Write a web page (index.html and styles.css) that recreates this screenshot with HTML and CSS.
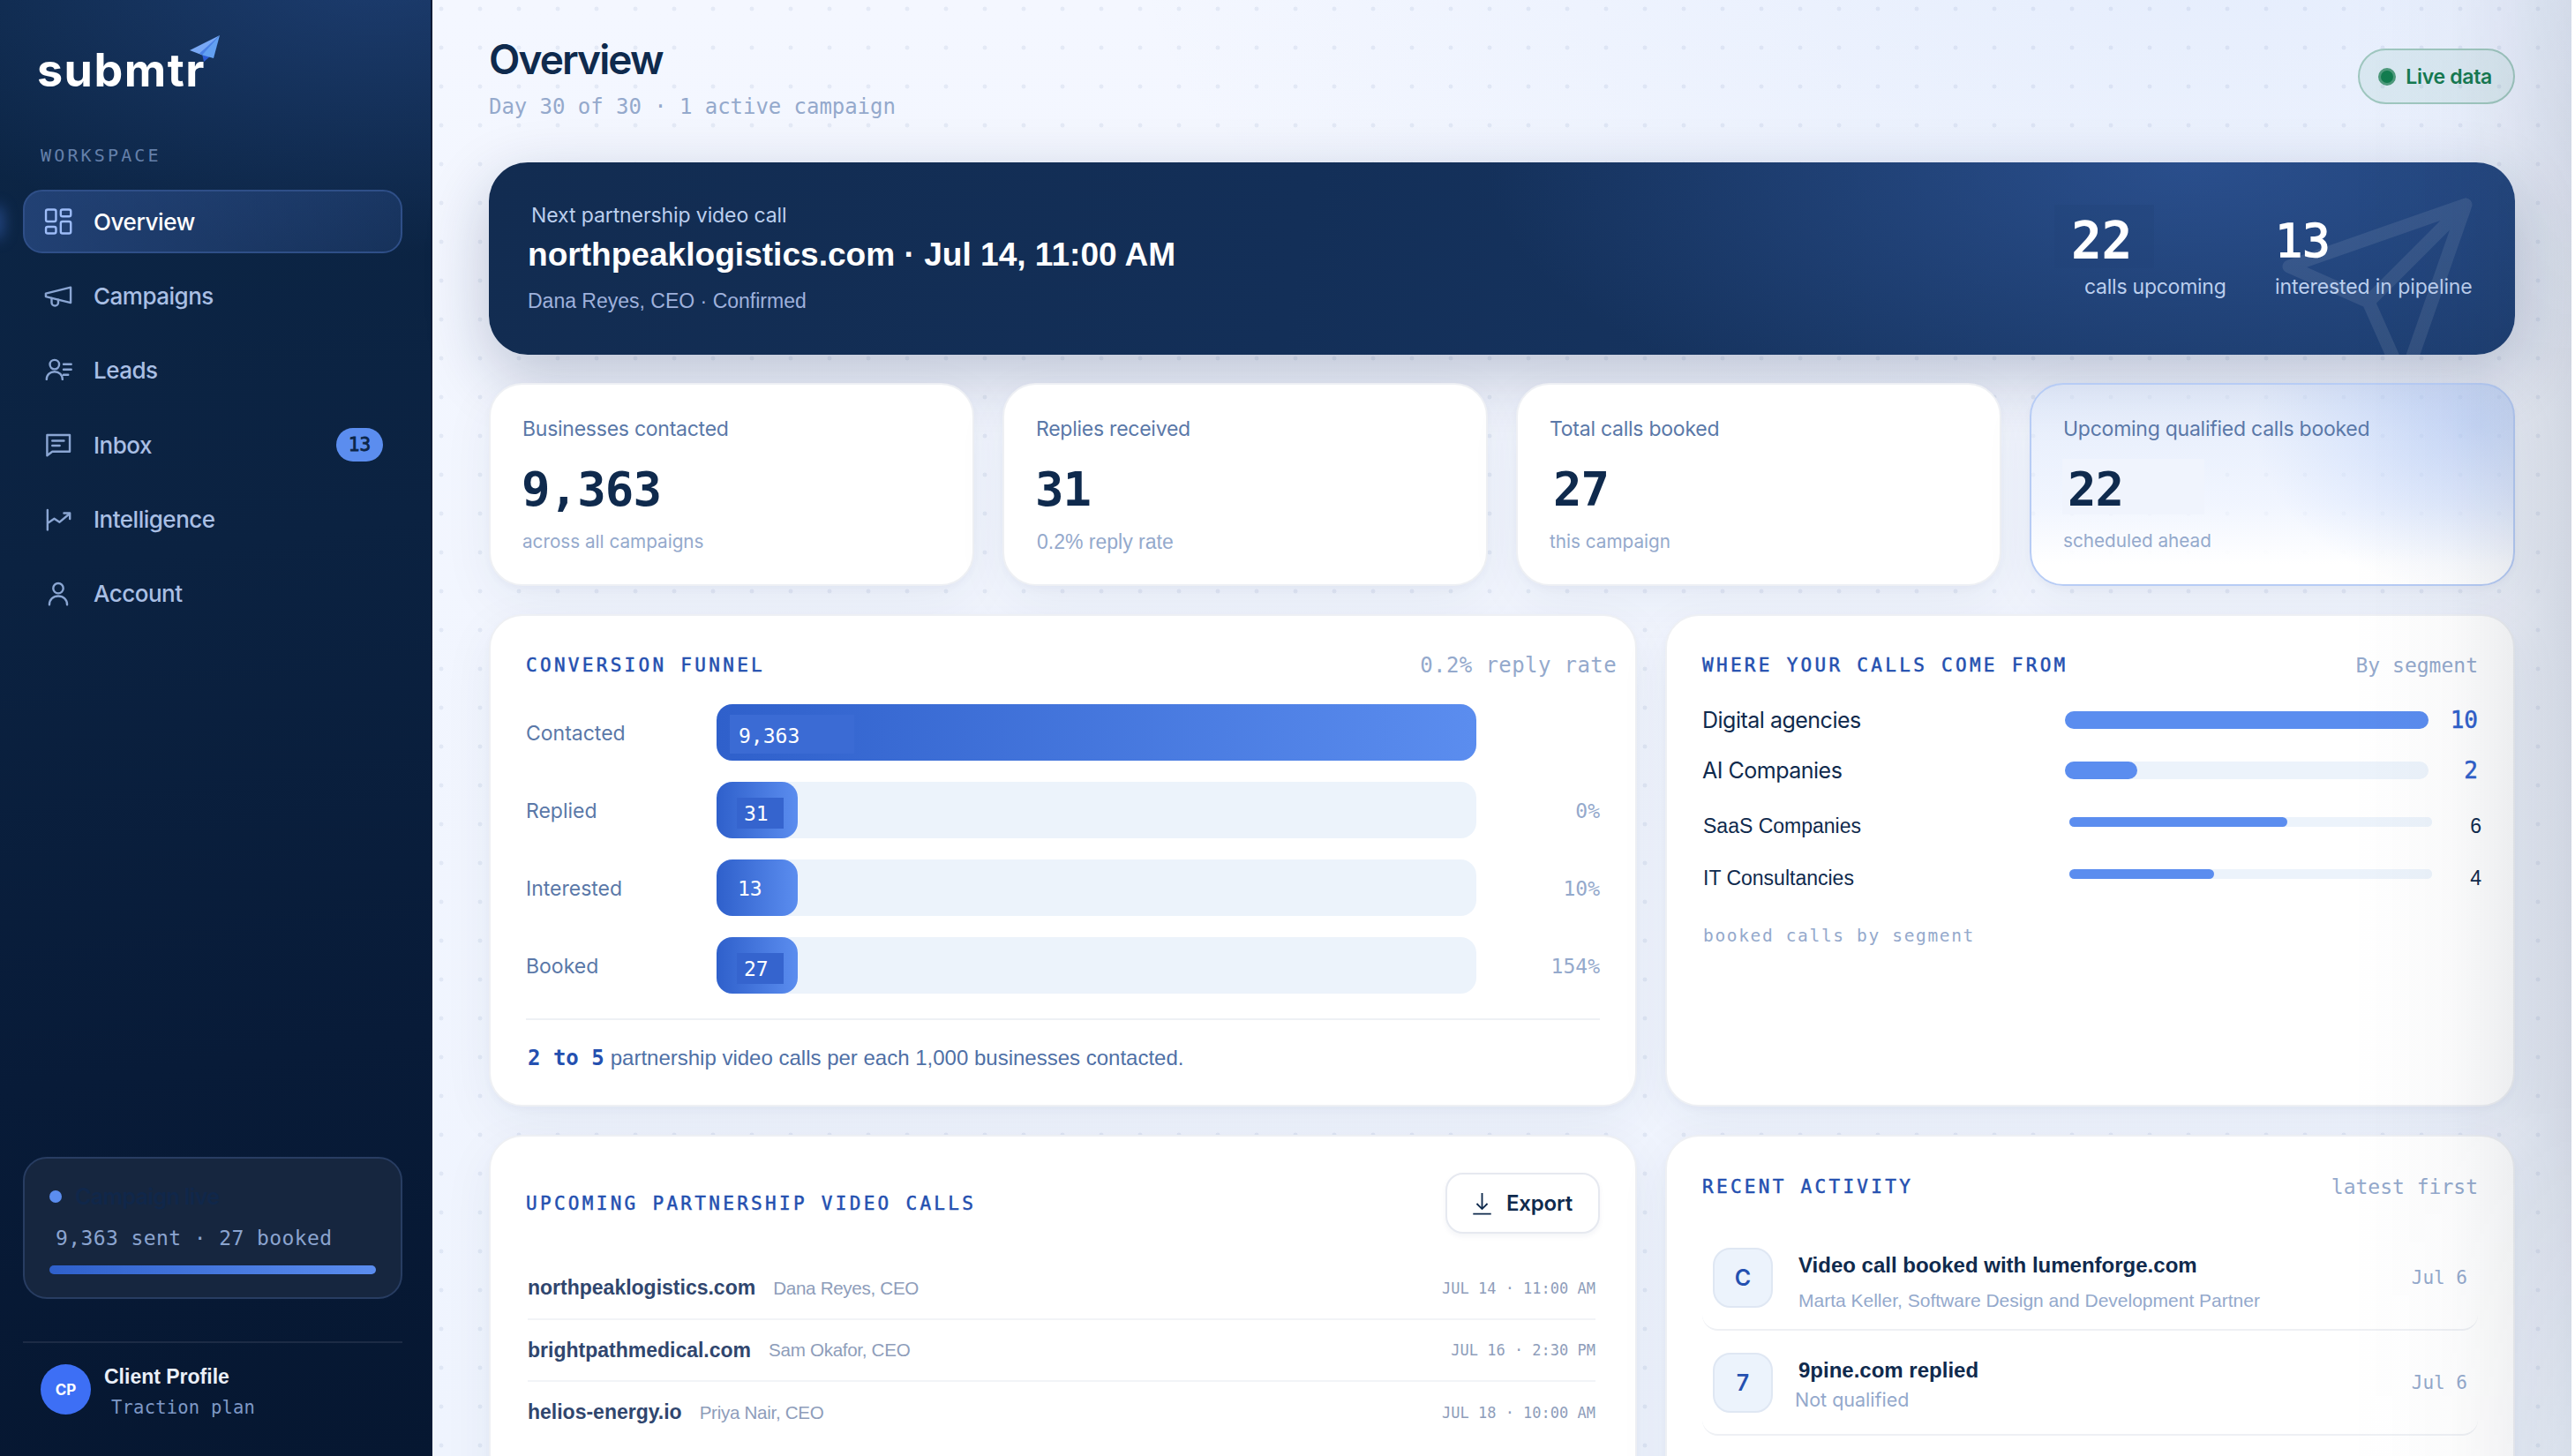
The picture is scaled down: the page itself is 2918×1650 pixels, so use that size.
FILE: index.html
```html
<!DOCTYPE html>
<html lang="en">
<head>
	<meta charset="UTF-8">
	<title>submtr - Overview</title>
	<link rel="stylesheet" href="styles.css">
</head>
<body>
	<div class="app">
		<aside class="sidebar">
			<div class="logo">submtr
				<svg class="logo-plane" viewBox="0 0 36 32">
					<path d="M15 22 L17 31 L24 25 Z" fill="#2c5bd6"/>
					<path d="M1 18 L35 1 L14 23 Z" fill="#79a8f5"/>
					<path d="M35 1 L14 23 L28 27 Z" fill="#62a0f2"/>
					<path d="M35 1 L12 21.500 L15 23.500 Z" fill="#4a80e6"/>
				</svg>
			</div>
			<div class="nav-title">WORKSPACE</div>
			<nav class="nav">
				<a class="nav-item active">
					<svg viewBox="0 0 24 24"><rect x="2.7" y="3" width="7.6" height="9" rx="1.4"/><rect x="13.9" y="3" width="7.6" height="5.2" rx="1.4"/><rect x="2.7" y="16" width="7.6" height="5" rx="1.4"/><rect x="13.9" y="12" width="7.6" height="9" rx="1.4"/></svg>
					<span>Overview</span>
				</a>
				<a class="nav-item">
					<svg viewBox="0 0 24 24"><path d="M2.6 10.4 21.4 5.8v11.6L2.6 12.7z"/><path d="M7 14v3.2a2.5 2.5 0 0 0 5 0v-2"/></svg>
					<span>Campaigns</span>
				</a>
				<a class="nav-item">
					<svg viewBox="0 0 24 24"><circle cx="9.2" cy="7.4" r="3.5"/><path d="M3.2 18.6c0-3.6 2.6-5.8 6-5.8s6 2.2 6 5.8M16 7.2h5.8M16 11.2h5.8M16 15.2h3.5"/></svg>
					<span>Leads</span>
				</a>
				<a class="nav-item">
					<svg viewBox="0 0 24 24"><path d="M3.6 4.7h17.1v12.5H7.5l-3.9 3z"/><path d="M7.5 9h8.8M7.5 12.7h5.6"/></svg>
					<span>Inbox</span>
					<b class="nav-badge">13</b>
				</a>
				<a class="nav-item">
					<svg viewBox="0 0 24 24"><path d="M3.9 4.6v15M3.9 14.6 9 11.2l4 2.6 7.5-6.3"/><path d="M16.3 7h4.5v4.3"/></svg>
					<span>Intelligence</span>
				</a>
				<a class="nav-item">
					<svg viewBox="0 0 24 24"><circle cx="12" cy="7.8" r="3.8"/><path d="M5.3 20.2c0-4 2.9-6.5 6.7-6.5s6.7 2.5 6.7 6.5"/></svg>
					<span>Account</span>
				</a>
			</nav>
			<div class="status">
				<div class="status-top"><i></i><span>Campaign live</span></div>
				<div class="status-text">9,363 sent · 27 booked</div>
				<div class="status-bar"></div>
			</div>
			<div class="profile">
				<div class="avatar">CP</div>
				<div>
					<div class="profile-name">Client Profile</div>
					<div class="profile-plan">Traction plan</div>
				</div>
			</div>
		</aside>

		<main class="main">
			<header class="header">
				<div>
					<h1>Overview</h1>
					<p>Day 30 of 30 · 1 active campaign</p>
				</div>
				<div class="live"><i></i>Live data</div>
			</header>

			<section class="hero">
				<svg class="hero-plane" viewBox="0 0 24 24"><path d="M22 2 11 13M22 2l-7 20-4-9-9-4z"/></svg>
				<div class="hero-info">
					<div class="hero-label">Next partnership video call</div>
					<div class="hero-title">northpeaklogistics.com · Jul 14, 11:00 AM</div>
					<div class="hero-sub">Dana Reyes, CEO · Confirmed</div>
				</div>
				<div class="hero-stat upcoming">
					<b>22</b>
					<span>calls upcoming</span>
				</div>
				<div class="hero-stat">
					<b>13</b>
					<span>interested in pipeline</span>
				</div>
			</section>

			<section class="stats">
				<div class="card stat">
					<div class="stat-label">Businesses contacted</div>
					<div class="stat-value">9,363</div>
					<div class="stat-sub">across all campaigns</div>
				</div>
				<div class="card stat">
					<div class="stat-label">Replies received</div>
					<div class="stat-value">31</div>
					<div class="stat-sub plain">0.2% reply rate</div>
				</div>
				<div class="card stat">
					<div class="stat-label">Total calls booked</div>
					<div class="stat-value shift">27</div>
					<div class="stat-sub">this campaign</div>
				</div>
				<div class="card stat highlight">
					<div class="stat-label">Upcoming qualified calls booked</div>
					<div class="stat-value patch">22</div>
					<div class="stat-sub">scheduled ahead</div>
				</div>
			</section>

			<section class="panels">
				<div class="card panel funnel">
					<div class="panel-head">
						<h2>CONVERSION FUNNEL</h2>
						<span class="rate">0.2% reply rate</span>
					</div>
					<div class="funnel-row">
						<label>Contacted</label>
						<div class="track"><div class="fill" style="width:100%"><span class="chip wide">9,363</span></div></div>
						<em></em>
					</div>
					<div class="funnel-row">
						<label>Replied</label>
						<div class="track"><div class="fill"><span class="chip">31</span></div></div>
						<em>0%</em>
					</div>
					<div class="funnel-row">
						<label>Interested</label>
						<div class="track"><div class="fill"><span class="count">13</span></div></div>
						<em>10%</em>
					</div>
					<div class="funnel-row">
						<label>Booked</label>
						<div class="track"><div class="fill"><span class="chip">27</span></div></div>
						<em>154%</em>
					</div>
					<div class="funnel-note"><b>2 to 5</b><span>partnership video calls per each 1,000 businesses contacted.</span></div>
				</div>

				<div class="card panel segments">
					<div class="panel-head">
						<h2>WHERE YOUR CALLS COME FROM</h2>
						<span>By segment</span>
					</div>
					<div class="seg">
						<label>Digital agencies</label>
						<div class="seg-track"><div style="width:100%"></div></div>
						<b>10</b>
					</div>
					<div class="seg">
						<label>AI Companies</label>
						<div class="seg-track"><div style="width:20%"></div></div>
						<b>2</b>
					</div>
					<div class="seg thin">
						<label>SaaS Companies</label>
						<div class="seg-track"><div style="width:60%"></div></div>
						<b>6</b>
					</div>
					<div class="seg thin last">
						<label>IT Consultancies</label>
						<div class="seg-track"><div style="width:40%"></div></div>
						<b>4</b>
					</div>
					<div class="seg-note">booked calls by segment</div>
				</div>

				<div class="card panel calls">
					<div class="panel-head">
						<h2>UPCOMING PARTNERSHIP VIDEO CALLS</h2>
						<button class="export">
							<svg viewBox="0 0 24 28"><path d="M12 1v19M5.5 14l6.5 6.5 6.5-6.5M1 26.5h22"/></svg>
							Export
						</button>
					</div>
					<div class="call"><b>northpeaklogistics.com</b><span>Dana Reyes, CEO</span><time>JUL 14 · 11:00 AM</time></div>
					<div class="call"><b>brightpathmedical.com</b><span>Sam Okafor, CEO</span><time>JUL 16 · 2:30 PM</time></div>
					<div class="call"><b>helios-energy.io</b><span>Priya Nair, CEO</span><time>JUL 18 · 10:00 AM</time></div>
				</div>

				<div class="card panel activity">
					<div class="panel-head">
						<h2>RECENT ACTIVITY</h2>
						<span>latest first</span>
					</div>
					<div class="event">
						<div class="event-icon">C</div>
						<div class="event-text">
							<b>Video call booked with lumenforge.com</b>
							<span>Marta Keller, Software Design and Development Partner</span>
						</div>
						<time>Jul 6</time>
					</div>
					<div class="event">
						<div class="event-icon">7</div>
						<div class="event-text">
							<b>9pine.com replied</b>
							<span class="near">Not qualified</span>
						</div>
						<time>Jul 6</time>
					</div>
				</div>
			</section>
		</main>
	</div>
</body>
</html>
```
FILE: styles.css
```css
*{
	box-sizing: border-box;
}
body{
	margin: 0;
	height: 1650px;
	overflow: hidden;
	background: #fff;
	font-family: Inter, "Liberation Sans", sans-serif;
	color: #0f2a4d;
}
h1,h2,p{
	margin: 0;
}
.app{
	display: flex;
	width: 2914px;
	height: 1650px;
	overflow: hidden;
}

/* sidebar */
.sidebar{
	position: relative;
	display: flex;
	flex-direction: column;
	flex: none;
	width: 490px;
	padding: 50px 32px 41px 26px;
	overflow: hidden;
	background:
		radial-gradient(620px 330px at 88% -40px, rgba(52,92,168,.42), rgba(52,92,168,0) 100%),
		linear-gradient(172deg, #0c2646 0%, #0b2241 38%, #081b38 72%, #061731 100%);
	border-right: 2px solid #0a1a36;
}
.logo{
	display: flex;
	height: 60px;
	padding-left: 16px;
	font-size: 52px;
	line-height: 60px;
	font-weight: 700;
	letter-spacing: 1.5px;
	color: #fff;
}
.logo-plane{
	width: 36px;
	height: 32px;
	margin: -11px 0 0 -19px;
}
.nav-title{
	margin: 54px 0 27px 20px;
	font: 20px/24px "DejaVu Sans Mono", monospace;
	letter-spacing: 3.15px;
	color: #6580aa;
}
.nav{
	display: flex;
	flex-direction: column;
	gap: 12.4px;
}
.nav-item{
	position: relative;
	display: flex;
	align-items: center;
	gap: 22px;
	height: 72px;
	padding: 0 20px;
	border: 2px solid transparent;
	border-radius: 22px;
	font-size: 26px;
	font-weight: 500;
	letter-spacing: -0.5px;
	color: #a9bfe4;
}
.nav-item svg{
	width: 36px;
	height: 36px;
	fill: none;
	stroke: #8ba6d3;
	stroke-width: 1.6;
	stroke-linejoin: round;
	stroke-linecap: round;
}
.nav-item.active{
	letter-spacing: -0.4px;
	color: #fff;
	border-color: #2f4f88;
	background: linear-gradient(100deg, rgba(64,104,182,.42), rgba(64,104,182,.2));
}
.nav-item.active svg{
	stroke: #9dbcf8;
}
.nav-item.active::before{
	content: "";
	position: absolute;
	left: -40px;
	top: 16px;
	width: 16px;
	height: 38px;
	border-radius: 8px;
	background: rgba(60,106,196,.5);
	filter: blur(8px);
}
.nav-badge{
	width: 53px;
	margin-left: auto;
	border-radius: 19px;
	background: #5b8def;
	font: 21px/38px "DejaVu Sans Mono", monospace;
	letter-spacing: 0;
	-webkit-text-stroke: 0.8px #0c2547;
	text-align: center;
	color: #0c2547;
}
.status{
	height: 161px;
	margin-top: auto;
	padding: 28px;
	border: 2px solid #283d62;
	border-radius: 27px;
	background: #16263f;
}
.status-top{
	display: flex;
	align-items: center;
	gap: 15px;
	font-size: 25px;
	line-height: 30px;
	font-weight: 600;
	letter-spacing: -0.6px;
	color: #10274a;
}
.status-top i{
	width: 14px;
	height: 14px;
	border-radius: 50%;
	background: #5b8def;
}
.status-text{
	margin: 17px 0 16px 7px;
	font: 23px/30px "DejaVu Sans Mono", monospace;
	letter-spacing: 0.4px;
	white-space: nowrap;
	color: #8ba4cf;
}
.status-bar{
	height: 10px;
	border-radius: 5px;
	background: linear-gradient(90deg, #2f60cb, #5b8def);
}
.profile{
	display: flex;
	gap: 15px;
	margin-top: 48px;
	padding: 24px 0 0 20px;
	border-top: 2px solid #1c2b45;
}
.avatar{
	width: 57px;
	height: 57px;
	border-radius: 50%;
	background: #3d6ff5;
	font: bold 17px/58px Inter, sans-serif;
	text-align: center;
	color: #fff;
}
.profile-name{
	font: bold 23px/28px "Liberation Sans", sans-serif;
	color: #eaeff8;
}
.profile-plan{
	margin: 7px 0 0 8px;
	font: 20.5px/28px "DejaVu Sans Mono", monospace;
	letter-spacing: 0.2px;
	color: #7e98c6;
}

/* main */
.main{
	position: relative;
	flex: none;
	width: 2424px;
	padding: 39px 64px 0;
	background:
		radial-gradient(circle, rgba(60,90,150,.085) 2.2px, transparent 2.7px) 32px -12px / 44px 44px,
		radial-gradient(1250px 560px at 84% -60px, rgba(120,165,235,.12), rgba(120,165,235,0) 100%),
		linear-gradient(180deg, #f4f7ff, #eff4fe);
}
/* darkening towards the right edge */
.main::after{
	content: "";
	position: absolute;
	top: 0;
	right: 0;
	bottom: 0;
	width: 250px;
	background: linear-gradient(270deg, rgba(20,35,60,.15), rgba(20,35,60,.075) 28%, rgba(20,35,60,.025) 55%, rgba(20,35,60,0));
	-webkit-mask-image: linear-gradient(180deg, rgba(0,0,0,.7), #000 25%, #000 75%, rgba(0,0,0,.7));
	mask-image: linear-gradient(180deg, rgba(0,0,0,.7), #000 25%, #000 75%, rgba(0,0,0,.7));
	pointer-events: none;
}
.header{
	display: flex;
	justify-content: space-between;
	align-items: flex-start;
	margin-bottom: 48px;
}
.header h1{
	font-size: 46px;
	line-height: 57px;
	font-weight: 600;
	letter-spacing: -1.9px;
}
.header p{
	margin-top: 10px;
	font: 24px/30px "DejaVu Sans Mono", monospace;
	letter-spacing: -0.05px;
	color: #94a9cc;
}
.live{
	display: flex;
	align-items: center;
	gap: 11px;
	height: 63px;
	margin-top: 16px;
	padding: 0 24px 0 21px;
	border: 2px solid #9fc7bf;
	border-radius: 32px;
	background: rgba(20,125,80,.07);
	font-size: 23px;
	font-weight: 600;
	letter-spacing: -0.3px;
	color: #167a51;
}
.live i{
	width: 20px;
	height: 20px;
	border: 3px solid #4d9a7b;
	border-radius: 50%;
	background: #127c4f;
}

.hero{
	position: relative;
	display: flex;
	height: 218px;
	padding: 45px 49px 0 43px;
	border-radius: 44px;
	overflow: hidden;
	color: #fff;
	background:
		radial-gradient(800px 330px at 84% 0, rgba(64,108,190,.44), rgba(64,108,190,0) 100%),
		linear-gradient(100deg, #122c51, #132f58 40%, #1b3b6b);
	box-shadow: 0 24px 72px rgba(18,35,75,.24);
}
.hero-plane{
	position: absolute;
	right: 36px;
	top: 28px;
	width: 240px;
	height: 240px;
	fill: none;
	stroke: rgba(255,255,255,.09);
	stroke-width: 1.5;
	stroke-linecap: round;
	stroke-linejoin: round;
}
.hero-info{
	flex: 1;
}
.hero-label{
	margin-left: 5px;
	font-size: 23px;
	line-height: 30px;
	letter-spacing: -0.1px;
	color: #bccfee;
}
.hero-title{
	margin: 6px 0 0 1px;
	font: bold 37.1px/46px "Liberation Sans", sans-serif;
}
.hero-sub{
	margin: 15px 0 0 1px;
	font: 23px/30px "Liberation Sans", sans-serif;
	color: #9fb1dc;
}
.hero-stat{
	position: relative;
	padding-top: 3px;
	width: 223px;
	white-space: nowrap;
}
.hero-stat b{
	display: block;
	height: 72px;
	padding-top: 10px;
	font: 52px/62px "DejaVu Sans Mono", monospace;
	-webkit-text-stroke: 1.6px #fff;
}
.hero-stat span{
	display: block;
	margin-top: 6px;
	font-size: 23px;
	line-height: 30px;
	letter-spacing: -0.1px;
	color: #bccfee;
}
.hero-stat.upcoming{
	width: 250px;
}
.hero-stat.upcoming b{
	width: 113px;
	padding-left: 19px;
	font-size: 58px;
	font-weight: bold;
	letter-spacing: -0.5px;
	-webkit-text-stroke: 0;
	background: rgba(34,65,118,.3);
}
.hero-stat.upcoming span{
	margin-left: 34px;
	letter-spacing: -0.25px;
}
.card{
	border: 2px solid #eef0f4;
	border-radius: 38px;
	background: #fff;
	box-shadow: 0 4px 8px rgba(20,45,90,.03), 0 16px 60px rgba(20,45,90,.06);
}
.stats{
	display: grid;
	grid-template-columns: repeat(4, 1fr);
	gap: 32px;
	margin-top: 32px;
}
.stat{
	position: relative;
	height: 230px;
	padding: 35px 35px 0 36px;
}
.stat-label{
	font-size: 23px;
	line-height: 30px;
	letter-spacing: -0.25px;
	color: #5a78a8;
}
.stat-value{
	margin: 24px 0 0 -1px;
	font: bold 54px/60px "DejaVu Sans Mono", monospace;
	letter-spacing: -0.9px;
}
.stat-value.shift{
	margin-left: 4px;
}
.stat-value.patch{
	width: 161px;
	height: 63px;
	margin: 19px 0 2px -1px;
	padding: 5px 0 0 6px;
	background: #f0f4fd;
}
.stat-sub{
	margin-top: 15px;
	font-size: 20.7px;
	line-height: 28px;
	color: #94a9cc;
}
.stat-value.patch + .stat-sub{
	margin-top: 16px;
}
.stat-sub.plain{
	font: 23px/28px "Liberation Sans", sans-serif;
	margin-left: 1px;
}
.stat.highlight{
	border-color: #b7ccf5;
	background:
		radial-gradient(250px 190px at 92% 20%, rgba(91,141,239,.22), rgba(91,141,239,0) 100%),
		linear-gradient(180deg, rgba(214,226,247,.5), rgba(240,245,255,.6) 60%, #fff 90%);
}

/* panels */
.panels{
	display: grid;
	grid-template-columns: 1301px 963px;
	gap: 32px;
	margin-top: 32px;
}
.panel{
	position: relative;
	height: 558px;
	padding: 41px 40px 0;
}
.panel-head{
	display: flex;
	justify-content: space-between;
	align-items: center;
	height: 30px;
	margin-bottom: 29px;
	font: 23px/30px "DejaVu Sans Mono", monospace;
	color: #94a9cc;
}
.panel-head h2{
	font: 500 21px/30px "DejaVu Sans Mono", monospace;
	letter-spacing: 3.3px;
	-webkit-text-stroke: 0.5px #2450b0;
	color: #2450b0;
}
.panel-head .rate{
	margin-right: -19px;
	font-size: 24px;
	letter-spacing: 0.4px;
}
.funnel-row{
	display: grid;
	grid-template-columns: 216px 861px 1fr;
	align-items: center;
	height: 64px;
	margin-bottom: 24px;
}
.funnel-row label{
	padding-top: 2px;
	font-size: 23px;
	color: #5a78a8;
}
.funnel-row em{
	padding-top: 1px;
	font: 23px/30px "DejaVu Sans Mono", monospace;
	text-align: right;
	color: #94a9cc;
}
.track{
	height: 64px;
	border-radius: 18px;
	background: #ecf3fb;
}
.fill{
	display: flex;
	align-items: flex-start;
	width: 92px;
	height: 64px;
	border-radius: 18px;
	background: linear-gradient(90deg, #2f60cb, #5b8def);
	font: 23px/36px "DejaVu Sans Mono", monospace;
	color: #fff;
}
.chip{
	margin: 18px 0 0 23px;
	width: 53px;
	height: 35px;
	padding-left: 8px;
	background: #3564ce;
}
.chip.wide{
	margin: 12px 0 0 15px;
	width: 141px;
	height: 44px;
	padding: 6px 0 0 10px;
	background: #3b6bd4;
}
.count{
	margin: 15px 0 0 24px;
}
.funnel-note{
	display: flex;
	gap: 7px;
	margin-top: 28px;
	padding: 28px 0 0 2px;
	border-top: 2px solid #eef1f5;
	font: 24px/30px "Liberation Sans", sans-serif;
	color: #4f70a6;
}
.funnel-note b{
	font-family: "DejaVu Sans Mono", monospace;
	font-size: 24px;
	color: #2450b0;
}
.seg{
	display: grid;
	grid-template-columns: 411px 412px 1fr;
	align-items: center;
	height: 32px;
	margin: 31px 0 25px;
	font-size: 25px;
	letter-spacing: -0.5px;
}
.seg + .seg{
	margin-top: 0;
}
.seg b{
	font: 26px/32px "DejaVu Sans Mono", monospace;
	letter-spacing: 0;
	-webkit-text-stroke: 0.5px #2f60cb;
	text-align: right;
	color: #2f60cb;
}
.seg-track{
	height: 20px;
	border-radius: 10px;
	background: #ecf3fb;
}
.seg-track div{
	height: 100%;
	border-radius: 10px;
	background: #5b8def;
}
.seg.thin{
	margin: 31px -4px 27px 1px;
	grid-template-columns: 415px 411px 1fr;
	font: 23px/32px "Liberation Sans", sans-serif;
	letter-spacing: 0;
}
.seg.thin.last{
	margin: 27px -4px 37px 1px;
}
.seg.thin b{
	font: 23px/32px "Liberation Sans", sans-serif;
	-webkit-text-stroke: 0;
	color: #0f2a4d;
}
.seg.thin .seg-track{
	height: 11px;
	margin-top: -9px;
	border-radius: 5px;
}
.seg-note{
	margin-left: 1px;
	font: 19.5px/26px "DejaVu Sans Mono", monospace;
	letter-spacing: 1.65px;
	color: #94a9cc;
}
.calls .panel-head{
	height: 69px;
	margin-bottom: 27px;
}
.export{
	display: flex;
	align-items: center;
	gap: 16px;
	width: 175px;
	height: 69px;
	padding: 0 0 0 28px;
	border: 2px solid #e6e9f0;
	border-radius: 20px;
	background: #fff;
	box-shadow: 0 3px 6px rgba(20,45,90,.05);
	font: 600 24px/30px Inter, sans-serif;
	letter-spacing: -0.2px;
	color: #0f2a4d;
}
.export svg{
	flex: none;
	width: 23px;
	height: 26px;
	fill: none;
	stroke: #0f2a4d;
	stroke-width: 2;
}
.call{
	display: flex;
	align-items: center;
	height: 70.5px;
	margin: 0 5px 0 2px;
	border-bottom: 2px solid #f2f4f7;
	font: 21.5px/30px "Liberation Sans", sans-serif;
	color: #8e9dba;
}
.call:last-child{
	border-bottom-color: transparent;
}
.call b{
	font-size: 23px;
	margin-right: 20px;
	color: #30466e;
}
.call span{
	font-size: 20.6px;
	letter-spacing: -0.3px;
	padding-top: 1px;
}
.call time{
	margin-left: auto;
	font: 17px/30px "DejaVu Sans Mono", monospace;
	padding-top: 1px;
}
.activity{
	padding-top: 42px;
}
.event{
	display: flex;
	align-items: flex-start;
	height: 119px;
	padding: 23px 12px 0;
	border-bottom: 2px solid #eef0f4;
	border-radius: 18px;
}
.event-icon{
	width: 68px;
	height: 68px;
	margin-top: 2px;
	border: 2px solid #dfe7f3;
	border-radius: 20px;
	background: #ecf3fc;
	font: 600 25px/64px Inter, sans-serif;
	text-align: center;
	color: #2450b0;
}
.event-text{
	flex: 1;
	padding: 7px 0 0 29px;
	font-family: "Liberation Sans", sans-serif;
}
.event-text b{
	display: block;
	font-size: 24px;
	line-height: 30px;
}
.event-text span{
	display: block;
	margin-top: 11px;
	font-size: 21px;
	line-height: 28px;
	color: #94a9cc;
}
.event-text .near{
	margin: 4px 0 0 -4px;
	font-family: Inter, sans-serif;
	font-size: 21.5px;
}
.event time{
	margin-top: 21px;
	font: 21px/30px "DejaVu Sans Mono", monospace;
	color: #94a9cc;
}
```
